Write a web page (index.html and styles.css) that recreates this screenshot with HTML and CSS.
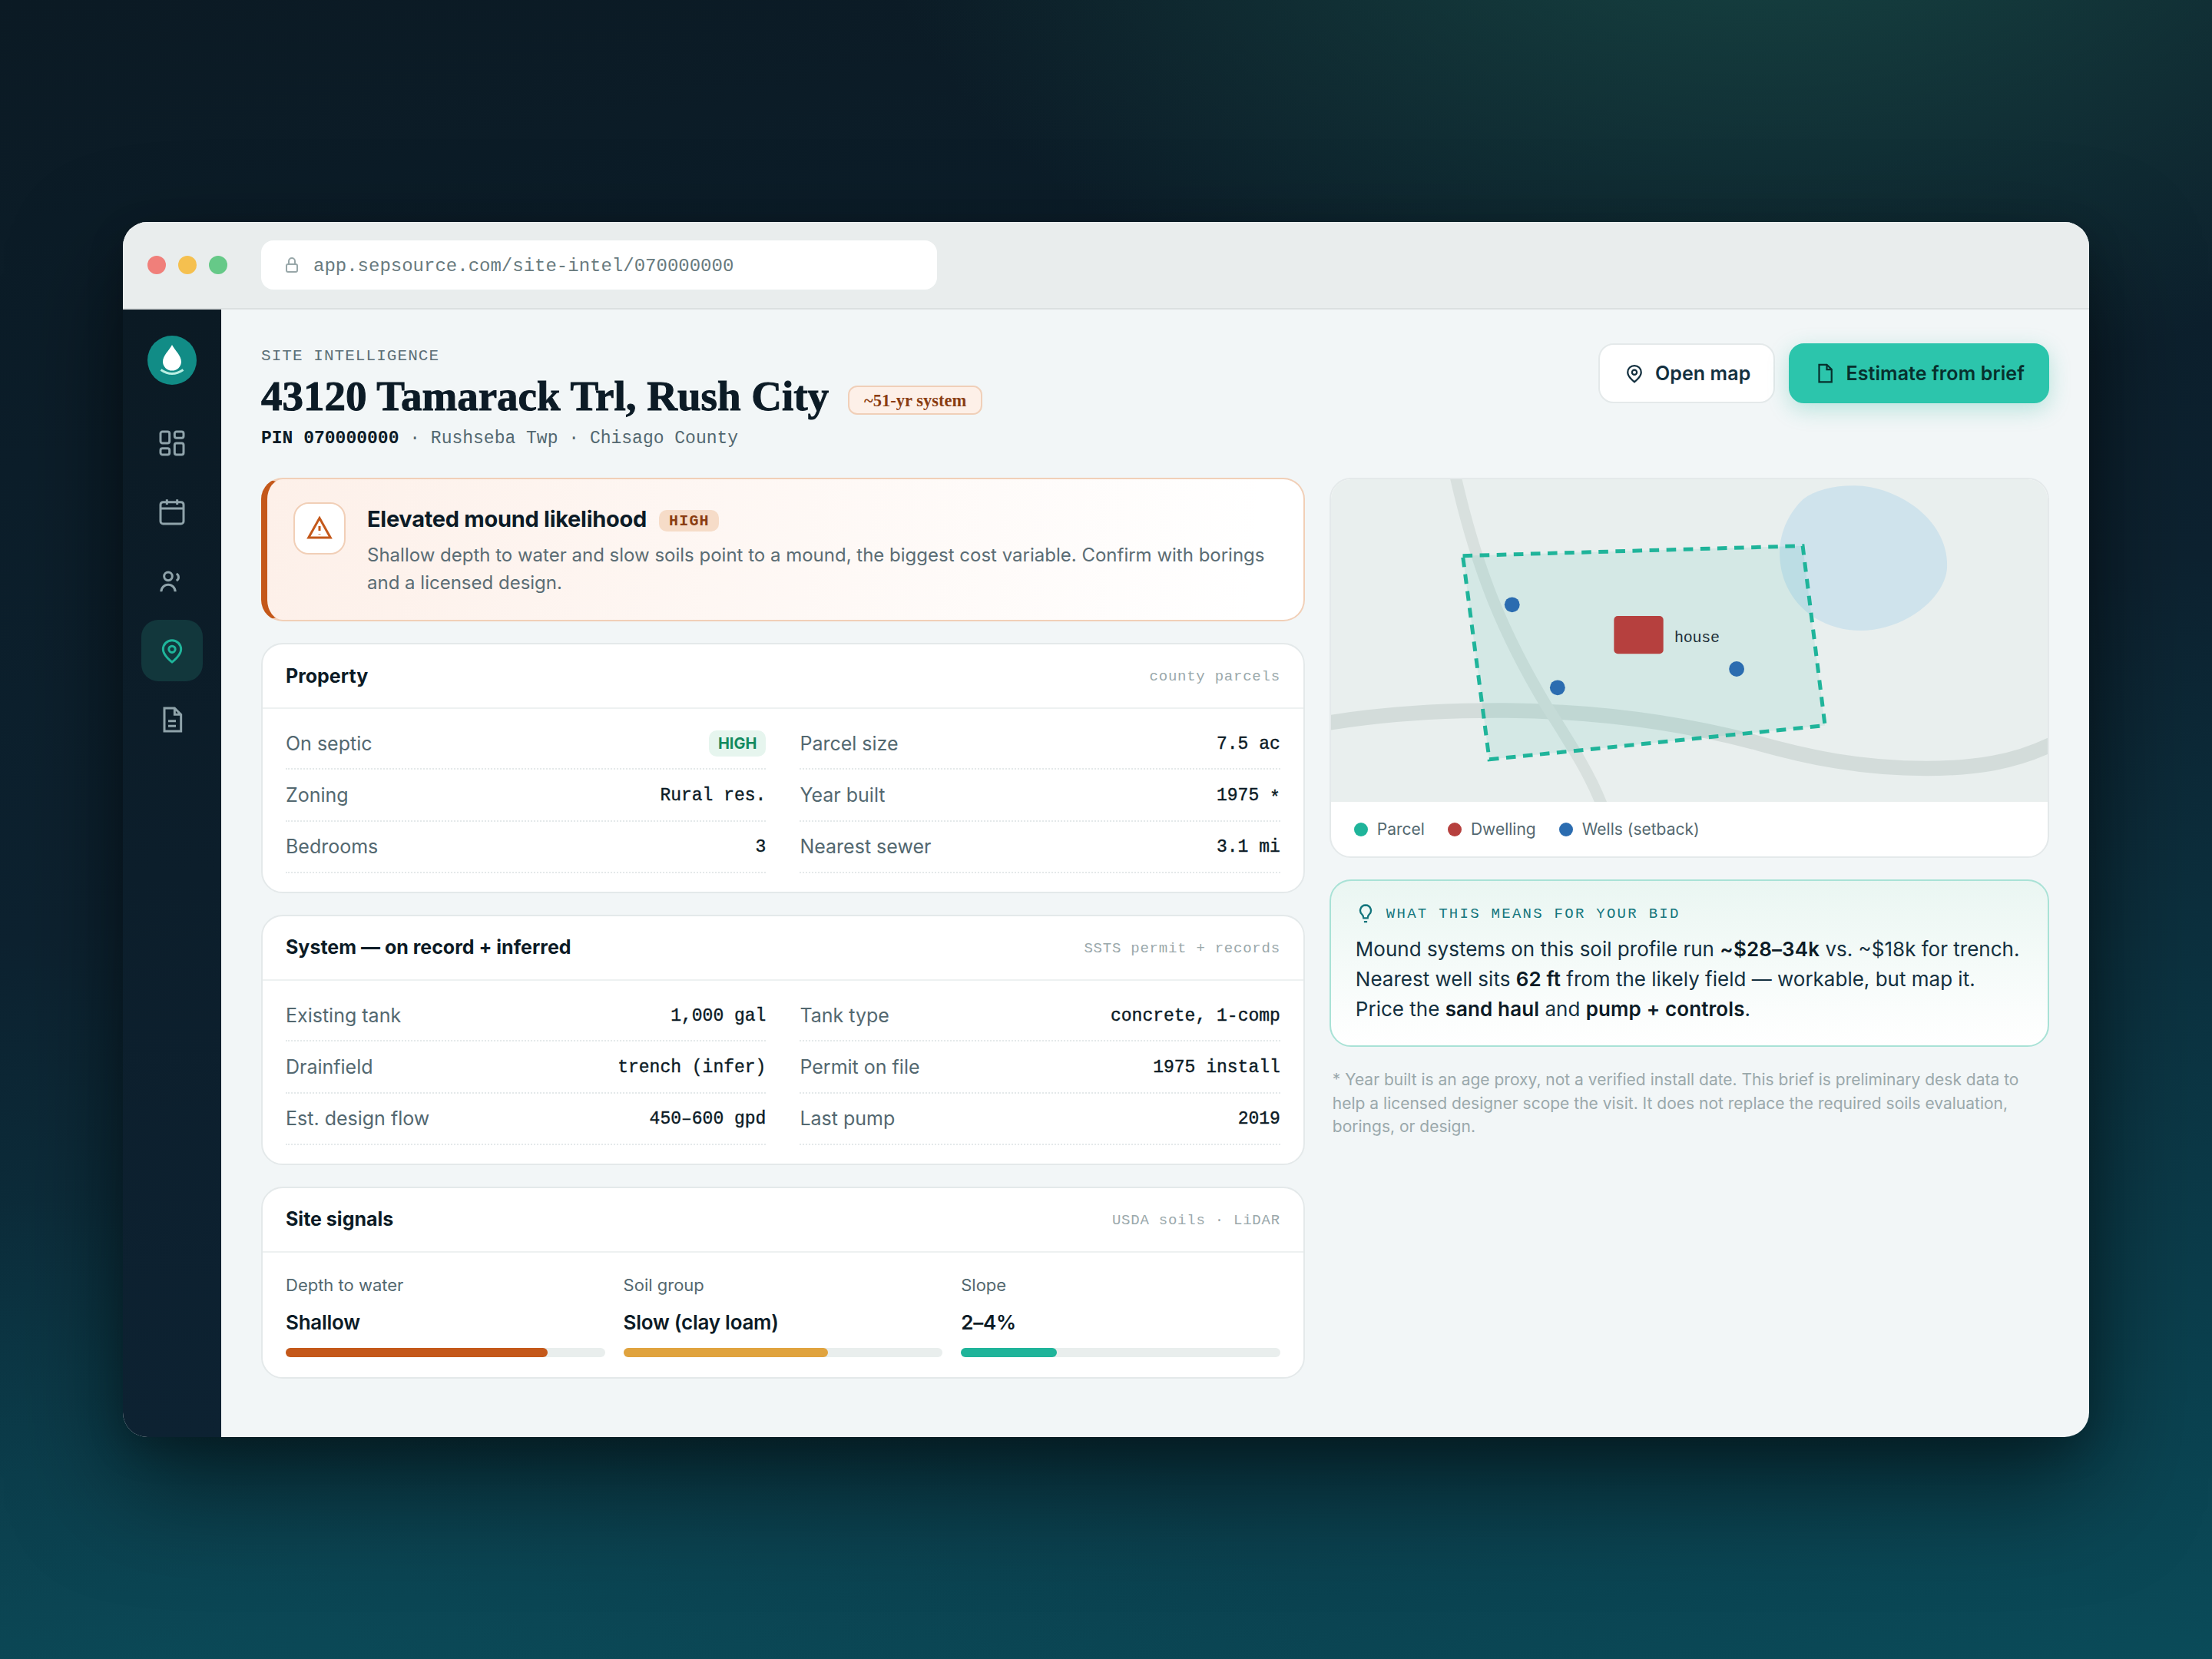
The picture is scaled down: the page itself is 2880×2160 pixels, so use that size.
FILE: index.html
```html
<!DOCTYPE html>
<html lang="en">
<head>
<meta charset="utf-8">
<title>Site Intelligence</title>
<link rel="stylesheet" href="styles.css">
</head>
<body>
<div class="window">
  <header class="chrome">
    <div class="lights"><span class="light red"></span><span class="light yellow"></span><span class="light green"></span></div>
    <div class="url">
      <svg class="lock" viewBox="0 0 24 24"><rect x="5" y="11" width="14" height="10" rx="2"/><path d="M8 11V7a4 4 0 0 1 8 0v4"/></svg>
      <span class="url-text">app.sepsource.com/site-intel/070000000</span>
    </div>
  </header>
  <div class="app">
    <nav class="rail">
      <svg class="logo" viewBox="0 0 64 64"><circle cx="32" cy="32" r="32" fill="#118c86"/><path d="M32 12c4 7.500 12 14 12 22a12 11.500 0 0 1-24 0c0-8 8-14.500 12-22z" fill="#fff"/><path d="M17.500 44.500Q32 54.500 46.500 44.500" fill="none" stroke="#b9efe3" stroke-width="3"/></svg>
      <a class="nav"><svg viewBox="0 0 24 24"><rect x="3" y="3" width="7" height="9" rx="1.500"/><rect x="14" y="3" width="7" height="5" rx="1.500"/><rect x="14" y="12" width="7" height="9" rx="1.500"/><rect x="3" y="16" width="7" height="5" rx="1.500"/></svg></a>
      <a class="nav"><svg viewBox="0 0 24 24"><rect x="3" y="4" width="18" height="17" rx="2"/><path d="M3 9h18M8 2v4M16 2v4"/></svg></a>
      <a class="nav"><svg viewBox="0 0 24 24"><circle cx="9" cy="8" r="3.200"/><path d="M3.500 20a5.500 5.500 0 0 1 11 0M15.400 6a3 3 0 0 1 0 5.400"/></svg></a>
      <a class="nav active"><svg viewBox="0 0 24 24"><path d="M12 21s7-5 7-10a7 7 0 0 0-14 0c0 5 7 10 7 10z"/><circle cx="12" cy="11" r="2.500"/></svg></a>
      <a class="nav"><svg viewBox="0 0 24 24"><path d="M6 3h8l5 5v13H6zM14 3v5h5M9 13h6M9 17h6"/></svg></a>
    </nav>
    <main class="main">
      <div class="head">
        <div class="heading">
          <div class="overline">SITE INTELLIGENCE</div>
          <h1 class="title"><span class="address">43120 Tamarack Trl, Rush City</span><span class="age">~51-yr system</span></h1>
          <div class="meta"><b>PIN 070000000</b> · Rushseba Twp · Chisago County</div>
        </div>
        <div class="actions">
          <button class="btn"><svg viewBox="0 0 24 24"><path d="M12 21s7-5 7-10a7 7 0 0 0-14 0c0 5 7 10 7 10z"/><circle cx="12" cy="11" r="2.500"/></svg>Open map</button>
          <button class="btn primary"><svg viewBox="0 0 24 24"><path d="M6 3h8l5 5v13H6zM14 3v5h5"/></svg>Estimate from brief</button>
        </div>
      </div>
      <div class="columns">
        <div class="col">
          <section class="alert">
            <div class="alert-icon"><svg viewBox="0 0 24 24"><path d="M12 3l9.500 17h-19zM12 10v4M12 17v.5"/></svg></div>
            <div class="alert-body">
              <div class="alert-title"><span>Elevated mound likelihood</span><span class="tag">HIGH</span></div>
              <p class="alert-text">Shallow depth to water and slow soils point to a mound, the biggest cost variable. Confirm with borings and a licensed design.</p>
            </div>
          </section>
          <section class="card">
            <div class="card-head"><h2>Property</h2><span class="source">county parcels</span></div>
            <div class="facts">
              <div class="fact"><span>On septic</span><span class="pill">HIGH</span></div>
              <div class="fact"><span>Parcel size</span><span class="value">7.5 ac</span></div>
              <div class="fact"><span>Zoning</span><span class="value">Rural res.</span></div>
              <div class="fact"><span>Year built</span><span class="value">1975 <span class="mark">*</span></span></div>
              <div class="fact"><span>Bedrooms</span><span class="value">3</span></div>
              <div class="fact"><span>Nearest sewer</span><span class="value">3.1 mi</span></div>
            </div>
          </section>
          <section class="card">
            <div class="card-head"><h2>System — on record + inferred</h2><span class="source">SSTS permit + records</span></div>
            <div class="facts">
              <div class="fact"><span>Existing tank</span><span class="value">1,000 gal</span></div>
              <div class="fact"><span>Tank type</span><span class="value">concrete, 1-comp</span></div>
              <div class="fact"><span>Drainfield</span><span class="value">trench (infer)</span></div>
              <div class="fact"><span>Permit on file</span><span class="value">1975 install</span></div>
              <div class="fact"><span>Est. design flow</span><span class="value">450–600 gpd</span></div>
              <div class="fact"><span>Last pump</span><span class="value">2019</span></div>
            </div>
          </section>
          <section class="card">
            <div class="card-head"><h2>Site signals</h2><span class="source">USDA soils · LiDAR</span></div>
            <div class="signals">
              <div class="signal"><span class="signal-name">Depth to water</span><span class="signal-value">Shallow</span><div class="bar"><div class="fill rust" style="width:82%"></div></div></div>
              <div class="signal"><span class="signal-name">Soil group</span><span class="signal-value">Slow (clay loam)</span><div class="bar"><div class="fill amber" style="width:64%"></div></div></div>
              <div class="signal"><span class="signal-name">Slope</span><span class="signal-value">2–4%</span><div class="bar"><div class="fill teal" style="width:30%"></div></div></div>
            </div>
          </section>
        </div>
        <div class="col">
          <section class="card map-card">
            <svg class="map" viewBox="0 0 933 420" preserveAspectRatio="none">
              <rect width="933" height="420" fill="#e9efee"/>
              <path d="M614.500 26C630 14 655 8 682 8.300C735 9 802 50 802 112C802 155 745 197 690 197C630 197 584 155 584 96C584 66 598 42 614.500 26z" fill="#cfe3ec"/>
              <path d="M-5 317.500C70 305 150 300.500 228 301C340 302 450 316 550 342C620 362 690 376.500 775 376.500C840 376.500 890 368 938 345" fill="none" stroke="#d3dcda" stroke-width="19.500"/>
              <path d="M161.500 -6C190 120 225 203 281 296C312 345 338 385 354 428" fill="none" stroke="#d8e0de" stroke-width="15"/>
              <path d="M171.500 99.700L614 86.700L643 320.500L206 364.800Z" fill="#1fb49a" fill-opacity=".1" stroke="#1fb49a" stroke-width="5" stroke-dasharray="12.600 9.500"/>
              <rect x="368.300" y="178" width="64.300" height="49.300" rx="5" fill="#b6403e"/>
              <circle cx="235.700" cy="163.300" r="9.900" fill="#2b6cb0"/><circle cx="294.800" cy="271.300" r="9.900" fill="#2b6cb0"/><circle cx="528" cy="247" r="9.900" fill="#2b6cb0"/>
              <text class="map-label" x="447" y="212">house</text>
            </svg>
            <div class="legend">
              <span class="key"><i class="dot teal"></i>Parcel</span>
              <span class="key"><i class="dot brick"></i>Dwelling</span>
              <span class="key"><i class="dot blue"></i>Wells (setback)</span>
            </div>
          </section>
          <section class="bid">
            <div class="bid-head"><svg viewBox="0 0 24 24"><path d="M12 3a6 6 0 0 0-3.800 10.600c.9.800 1.300 1.800 1.300 3.200M12 3a6 6 0 0 1 3.800 10.600c-.9.800-1.300 1.800-1.300 3.200M8.700 17.400h6.600M10.200 21.500h3.600"/></svg><span class="bid-label">WHAT THIS MEANS FOR YOUR BID</span></div>
            <p class="bid-text">Mound systems on this soil profile run <b>~$28–34k</b> vs. ~$18k for trench. Nearest well sits <b>62 ft</b> from the likely field — workable, but map it. Price the <b>sand haul</b> and <b>pump + controls</b>.</p>
          </section>
          <p class="footnote">* Year built is an age proxy, not a verified install date. This brief is preliminary desk data to help a licensed designer scope the visit. It does not replace the required soils evaluation, borings, or design.</p>
        </div>
      </div>
    </main>
  </div>
</div>
</body>
</html>
```
FILE: styles.css
```css
* { box-sizing: border-box; margin: 0; padding: 0; }

body {
  height: 2160px;
  display: flex;
  align-items: center;
  justify-content: center;
  overflow: hidden;
  font-family: Inter, "Liberation Sans", sans-serif;
  color: #0c1b26;
  background:
    radial-gradient(1800px 1050px at 80% -8%, #174644 0%, rgba(23, 70, 68, 0) 65%),
    radial-gradient(2000px 1100px at 10% 110%, rgba(11, 88, 102, .55) 0%, rgba(11, 88, 102, 0) 75%),
    linear-gradient(170deg, #0b1a24 0%, #0d2230 46%, #0a4b59 100%);
}

svg { display: block; flex: none; fill: none; stroke: currentColor; stroke-width: 1.8; }

.window {
  width: 2560px;
  height: 1582px;
  display: flex;
  flex-direction: column;
  border-radius: 32px;
  overflow: hidden;
  background: #f2f6f7;
  box-shadow: 0 60px 140px rgba(0, 0, 0, .5), 0 16px 48px rgba(0, 0, 0, .2);
}

.chrome {
  flex: none;
  display: flex;
  align-items: center;
  gap: 44px;
  padding: 24px 32px;
  background: #e9eded;
  border-bottom: 2px solid #dbe0e0;
}
.lights { display: flex; gap: 16px; }
.light { width: 24px; height: 24px; border-radius: 50%; }
.red { background: #f07f7a; }
.yellow { background: #f5c04f; }
.green { background: #66c988; }
.url {
  width: 880px;
  height: 64px;
  display: flex;
  align-items: center;
  gap: 16px;
  padding: 0 28px;
  border-radius: 16px;
  background: #fff;
  color: #687a7e;
  font: 24px "Liberation Mono", monospace;
}
.url-text { padding-top: 2px; }
.lock { width: 24px; height: 24px; color: #98a7a9; stroke-width: 2; }

.app { flex: 1; display: flex; min-height: 0; }
.rail {
  flex: none;
  width: 128px;
  display: flex;
  flex-direction: column;
  align-items: center;
  gap: 10px;
  padding-top: 34px;
  background: linear-gradient(180deg, #0b1a24, #0d2232);
}
.logo { width: 64px; height: 64px; margin-bottom: 26px; stroke: none; }
.nav {
  width: 80px;
  height: 80px;
  display: flex;
  align-items: center;
  justify-content: center;
  border-radius: 22px;
  color: #8fa3aa;
}
.nav svg { width: 40px; height: 40px; }
.nav.active { background: #12373c; color: #1fb49a; }

.main { flex: 1; min-width: 0; padding: 44px 52px 0; }
.head { display: flex; justify-content: space-between; align-items: flex-start; height: 175px; }
.overline {
  margin-top: 3px;
  font: 21px/28px "Liberation Mono", monospace;
  letter-spacing: 1.05px;
  color: #5b6e76;
}
.title {
  display: flex;
  align-items: flex-start;
  gap: 25px;
  height: 72px;
  font: 700 55px/76px "Liberation Serif", serif;
}
.address { -webkit-text-stroke: 1px #0c1b26; }
.age {
  height: 38px;
  margin-top: 24px;
  padding: 0 19px;
  border: 2px solid #f0cfb8;
  border-radius: 12px;
  background: #fdf0e8;
  color: #8a3d12;
  font-size: 22.5px;
  line-height: 35px;
}
.meta {
  margin-top: 5px;
  font: 23px/32px "Liberation Mono", monospace;
  color: #536870;
}
.meta b { color: #0c1b26; }

.actions { display: flex; gap: 18px; }
.btn {
  height: 78px;
  display: flex;
  align-items: center;
  gap: 12px;
  padding: 0 30px;
  border: 2px solid #e4e9ea;
  border-radius: 20px;
  background: #fff;
  color: #13303f;
  font: 600 25px Inter, sans-serif;
  letter-spacing: .1px;
}
.btn svg { width: 30px; height: 30px; }
.btn.primary {
  border-color: #2cc5ac;
  background: #2cc5ac;
  color: #07302d;
  box-shadow: 0 8px 28px rgba(31, 180, 154, .28);
}

.columns { display: grid; grid-template-columns: 1.45fr 1fr; gap: 32px; align-items: start; }
.col { display: flex; flex-direction: column; gap: 28px; min-width: 0; }

.alert {
  height: 187px;
  display: flex;
  gap: 28px;
  padding: 30px 30px 0 34px;
  border: 2px solid #f1cfb7;
  border-left: 8px solid #c4581a;
  border-radius: 28px;
  background: linear-gradient(95deg, #fdf0e9, #fff 95%);
}
.alert-icon {
  flex: none;
  width: 68px;
  height: 68px;
  display: flex;
  align-items: center;
  justify-content: center;
  border: 2px solid #f1cfb7;
  border-radius: 20px;
  background: #fff;
  color: #c4581a;
}
.alert-icon svg { width: 36px; height: 36px; stroke-width: 2; }
.alert-title {
  display: flex;
  align-items: center;
  gap: 16px;
  height: 40px;
  margin-top: 1px;
  font-size: 29px;
  font-weight: 700;
  letter-spacing: -.29px;
}
.tag {
  height: 28px;
  margin-top: 6px;
  padding: 0 12px 0 13px;
  border-radius: 10px;
  background: #f6dcc8;
  color: #8a3d12;
  font: 700 20px/30px "Liberation Mono", monospace;
  letter-spacing: 1.2px;
}
.alert-text { margin-top: 10px; font-size: 24px; line-height: 36px; color: #5a6c74; }

.card { border: 2px solid #e4e9ea; border-radius: 28px; background: #fff; overflow: hidden; }
.card-head {
  height: 84px;
  display: flex;
  align-items: center;
  justify-content: space-between;
  padding: 0 30px;
  border-bottom: 2px solid #edf1f1;
}
.card-head h2 { padding-bottom: 1px; font-size: 25px; font-weight: 700; }
.source { padding-top: 2px; font: 19px "Liberation Mono", monospace; letter-spacing: .76px; color: #9aa8ab; }
.facts { display: grid; grid-template-columns: 1fr 1fr; column-gap: 44px; padding: 12px 30px 24px; }
.fact {
  height: 67.33px;
  display: flex;
  align-items: center;
  justify-content: space-between;
  border-bottom: 2px dotted #e4e9ea;
  font-size: 25px;
  color: #536870;
}
.value { padding-top: 2px; font: 23px "Liberation Mono", monospace; color: #0c1b26; -webkit-text-stroke: .4px #0c1b26; }
.mark { display: inline-block; transform: translateY(4px); }
.pill {
  height: 34px;
  padding: 0 12px;
  border-radius: 10px;
  background: #e6f5ee;
  color: #128a5f;
  font-size: 20px;
  font-weight: 700;
  line-height: 34px;
}

.signals { display: grid; grid-template-columns: repeat(3, 1fr); gap: 24px; padding: 25px 30px 26px; }
.signal { display: flex; flex-direction: column; }
.signal-name { font-size: 22px; line-height: 34px; color: #536870; }
.signal-value { margin-top: 12px; font-size: 26px; font-weight: 600; line-height: 40px; letter-spacing: -.26px; }
.bar { height: 12px; margin-top: 13px; border-radius: 6px; background: #e9eeed; }
.fill { height: 12px; border-radius: 6px; }
.rust { background: #c4581a; }
.amber { background: #e0a33e; }
.teal { background: #1fb49a; }
.brick { background: #b6403e; }
.blue { background: #2b6cb0; }

.map { width: 100%; height: 420px; stroke: none; }
.map-label { font: 20px "Liberation Mono", monospace; letter-spacing: -.3px; fill: #1d2f38; }
.legend { height: 71px; display: flex; align-items: center; gap: 30px; padding: 0 30px; font-size: 21px; color: #536870; }
.key { display: flex; align-items: center; gap: 12px; }
.dot { width: 18px; height: 18px; border-radius: 50%; }

.bid {
  height: 218px;
  padding: 28px 32px 0;
  border: 2px solid #a9e2d6;
  border-radius: 28px;
  background: linear-gradient(180deg, #eaf6f2, #fff);
}
.bid-head {
  height: 28px;
  display: flex;
  align-items: center;
  gap: 13px;
  color: #13757c;
  font: 19px "Liberation Mono", monospace;
  letter-spacing: 2.27px;
}
.bid-head svg { width: 28px; height: 28px; margin-left: -1px; stroke-width: 2; }
.bid-label { padding-top: 2px; }
.bid-text { margin-top: 13px; font-size: 26px; line-height: 39px; color: #13303f; }
.bid-text b { font-weight: 600; letter-spacing: .12px; color: #0c1b26; }
.footnote { padding: 0 4px; font-size: 21px; line-height: 30.5px; color: #9aa8ab; }
```
